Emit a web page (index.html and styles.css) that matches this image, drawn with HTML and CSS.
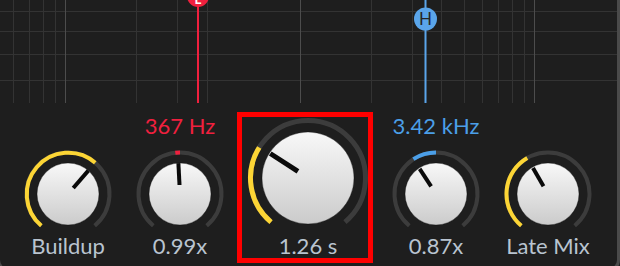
FILE: index.html
```html
<!DOCTYPE html>
<html lang="en">
<head>
    <meta charset="UTF-8">
    <title>Reverb Controls</title>
    <link rel="stylesheet" href="styles.css">
</head>
<body>
    <div class="panel">
        <svg class="graph" width="617" height="103" viewBox="0 0 617 103">
            <defs>
                <linearGradient id="knobFace" x1="0" y1="0" x2="0" y2="1">
                    <stop offset="0" stop-color="#f8f8f8"/>
                    <stop offset="1" stop-color="#cbcbcb"/>
                </linearGradient>
            </defs>
            <!-- horizontal grid -->
            <g stroke="#333" stroke-width="1">
                <line x1="0" y1="11.5" x2="617" y2="11.5"/>
                <line x1="0" y1="31.5" x2="617" y2="31.5"/>
                <line x1="0" y1="54.5" x2="617" y2="54.5"/>
                <line x1="0" y1="80.5" x2="617" y2="80.5"/>
            </g>
            <!-- vertical grid -->
            <g stroke="#333" stroke-width="1">
                <line x1="13.5" y1="0" x2="13.5" y2="103"/>
                <line x1="29.5" y1="0" x2="29.5" y2="103"/>
                <line x1="43.5" y1="0" x2="43.5" y2="103"/>
                <line x1="55.5" y1="0" x2="55.5" y2="103"/>
                <line x1="136.5" y1="0" x2="136.5" y2="103"/>
                <line x1="177.5" y1="0" x2="177.5" y2="103"/>
                <line x1="207.5" y1="0" x2="207.5" y2="103"/>
                <line x1="371.5" y1="0" x2="371.5" y2="103"/>
                <line x1="412.5" y1="0" x2="412.5" y2="103"/>
                <line x1="441.5" y1="0" x2="441.5" y2="103"/>
                <line x1="464.5" y1="0" x2="464.5" y2="103"/>
                <line x1="482.5" y1="0" x2="482.5" y2="103"/>
                <line x1="498.5" y1="0" x2="498.5" y2="103"/>
                <line x1="512.5" y1="0" x2="512.5" y2="103"/>
                <line x1="524.5" y1="0" x2="524.5" y2="103"/>
            </g>
            <g stroke="#4c4c4c" stroke-width="1">
                <line x1="65.5" y1="0" x2="65.5" y2="103"/>
                <line x1="300.5" y1="0" x2="300.5" y2="103"/>
                <line x1="534.5" y1="0" x2="534.5" y2="103"/>
            </g>
            <!-- low cut marker -->
            <line x1="198" y1="0" x2="198" y2="103" stroke="#f0203e" stroke-width="2"/>
            <circle cx="198" cy="-4" r="11" fill="#f0203e"/>
            <text class="marker-text light" x="198" y="3.5">L</text>
            <!-- high cut marker -->
            <line x1="425.5" y1="0" x2="425.5" y2="103" stroke="#5aa5ea" stroke-width="2"/>
            <circle cx="425.5" cy="19" r="11.5" fill="#5aa5ea"/>
            <text class="marker-text" x="425.5" y="25">H</text>
        </svg>

        <div class="controls">
            <div class="knob-col">
                <svg class="knob" width="88" height="88" viewBox="0 0 88 88">
                    <path class="track" d="M17.32 75.79 A41.5 41.5 0 1 1 70.68 75.79"/>
                    <path class="fill yellow" d="M17.32 75.79 A41.5 41.5 0 1 1 71.23 12.68"/>
                    <circle class="face" cx="44" cy="44" r="31"/>
                    <line class="pointer" x1="49.25" y1="37.96" x2="64.33" y2="20.61"/>
                </svg>
                <div class="label">Buildup</div>
            </div>

            <div class="knob-col">
                <div class="value red">367 Hz</div>
                <svg class="knob" width="88" height="88" viewBox="0 0 88 88">
                    <path class="track" d="M17.32 75.79 A41.5 41.5 0 1 1 70.68 75.79"/>
                    <path class="fill red" d="M39.3 2.77 A41.5 41.5 0 0 1 44 2.5"/>
                    <circle class="face" cx="44" cy="44" r="31"/>
                    <line class="pointer" x1="43.53" y1="35.01" x2="42.38" y2="13.04"/>
                </svg>
                <div class="label">0.99x</div>
            </div>

            <div class="knob-col big">
                <svg class="knob" width="120" height="120" viewBox="0 0 120 120">
                    <path class="track wide" d="M23.04 104.05 A57.5 57.5 0 1 1 96.96 104.05"/>
                    <path class="fill wide yellow" d="M23.04 104.05 A57.5 57.5 0 0 1 11.24 29.53"/>
                    <circle class="face" cx="60" cy="60" r="46"/>
                    <line class="pointer wide" x1="49.94" y1="53.46" x2="22.26" y2="35.49"/>
                </svg>
                <div class="label">1.26 s</div>
                <div class="highlight"></div>
            </div>

            <div class="knob-col">
                <div class="value blue">3.42 kHz</div>
                <svg class="knob" width="88" height="88" viewBox="0 0 88 88">
                    <path class="track" d="M17.32 75.79 A41.5 41.5 0 1 1 70.68 75.79"/>
                    <path class="fill blue" d="M21.40 9.19 A41.5 41.5 0 0 1 44 2.5"/>
                    <circle class="face" cx="44" cy="44" r="31"/>
                    <line class="pointer" x1="39.10" y1="36.45" x2="27.66" y2="18.84"/>
                </svg>
                <div class="label">0.87x</div>
            </div>

            <div class="knob-col">
                <svg class="knob" width="88" height="88" viewBox="0 0 88 88">
                    <path class="track" d="M17.32 75.79 A41.5 41.5 0 1 1 70.68 75.79"/>
                    <path class="fill yellow" d="M17.32 75.79 A41.5 41.5 0 0 1 23.25 8.06"/>
                    <circle class="face" cx="44" cy="44" r="31"/>
                    <line class="pointer" x1="39.5" y1="36.21" x2="29" y2="18.02"/>
                </svg>
                <div class="label">Late Mix</div>
            </div>
        </div>
    </div>
</body>
</html>
```

FILE: styles.css
```css
* {
    margin: 0;
    padding: 0;
    box-sizing: border-box;
}

body {
    background-color: #1e1e1e;
    font-family: Lato, 'Open Sans', sans-serif;
    overflow: hidden;
}

.panel {
    width: 623px;
    height: 272px;
    margin-left: -3px;
    background-color: #1e1e1e;
    border: 3px solid #4a4a4a;
    border-top: none;
    border-radius: 0 0 12px 12px;
}

.graph {
    display: block;
}

.marker-text {
    font-family: Lato, sans-serif;
    font-size: 17px;
    text-anchor: middle;
    fill: #262626;
}

.marker-text.light {
    fill: #ffffff;
    font-weight: bold;
    font-size: 13px;
}

.controls {
    display: flex;
    align-items: flex-end;
    gap: 24px;
    padding-left: 24px;
    height: 155px;
}

.knob-col {
    display: flex;
    flex-direction: column;
    align-items: center;
    width: 88px;
}

.knob-col.big {
    width: 120px;
    position: relative;
}

.knob {
    display: block;
    overflow: visible;
}

.track,
.fill {
    fill: none;
    stroke-width: 4;
}

.track {
    stroke: #3c3c3c;
}

.track.wide,
.fill.wide {
    stroke-width: 5;
}

.fill.yellow {
    stroke: #fcd535;
}

.fill.red {
    stroke: #f0203e;
}

.fill.blue {
    stroke: #4b9fe8;
}

.face {
    fill: url(#knobFace);
    stroke: rgba(0, 0, 0, 0.35);
    stroke-width: 1;
}

.pointer {
    stroke: #0a0a0a;
    stroke-width: 4;
}

.pointer.wide {
    stroke-width: 5;
}

.value {
    font-size: 22px;
    line-height: 24px;
    margin-bottom: 12px;
    white-space: nowrap;
}

.value.red {
    color: #f0203e;
}

.value.blue {
    color: #4b9fe8;
}

.label {
    font-size: 22px;
    line-height: 24px;
    margin-top: -4px;
    color: #b9c4d0;
    white-space: nowrap;
}

.highlight {
    position: absolute;
    left: -11px;
    right: -5px;
    top: -6px;
    bottom: -5px;
    border: 5px solid #ff0000;
}
```
